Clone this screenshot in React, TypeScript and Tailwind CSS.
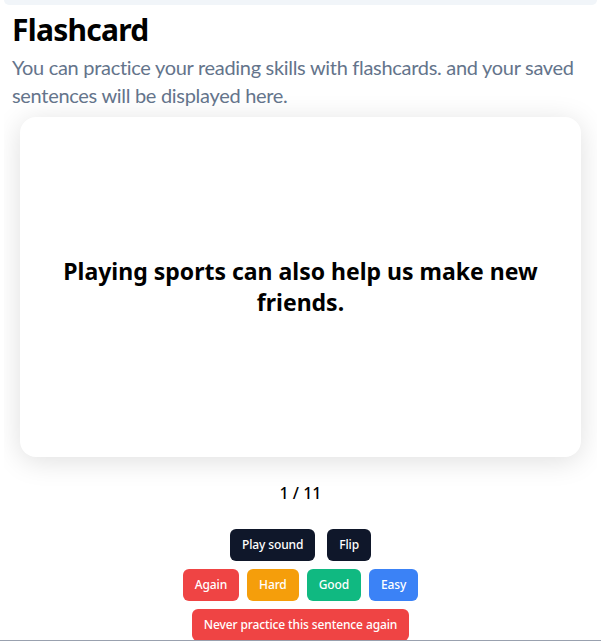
import React from "react";

const noto = { fontFamily: '"Noto Sans", "Open Sans", sans-serif' };
const lato = { fontFamily: 'Lato, "Noto Sans", sans-serif' };

function Btn({ label, color }: { label: string; color: string }) {
  return (
    <button
      className={`h-8 px-3 rounded-md text-xs font-medium tracking-[-0.01em] text-white ${color}`}
      style={noto}
    >
      {label}
    </button>
  );
}

export default function App() {
  return (
    <div className="h-[641px] overflow-hidden bg-white border-b border-gray-400" style={noto}>
      <div className="mx-1 overflow-hidden">
        {/* header strip (scrolled off) */}
        <div className="h-[5px] rounded-b-lg bg-[#f1f5f9]" />

        <div className="px-2 pt-[7px]">
          <h1 className="text-3xl font-bold text-black leading-9 tracking-tight">Flashcard</h1>
          <p className="mt-[5px] text-xl leading-7 text-[#64748b] tracking-[-0.015em]" style={lato}>
            You can practice your reading skills with flashcards. and your saved sentences will be
            displayed here.
          </p>
        </div>

        {/* card */}
        <div className="px-4 pt-2 pb-6">
          <div className="h-[340px] rounded-2xl bg-white shadow-[0_4px_28px_rgba(0,0,0,0.13)] flex items-center justify-center px-10">
            <p className="text-center text-[23px] leading-[31px] font-bold text-black">
              Playing sports can also help us make new friends.
            </p>
          </div>
        </div>

        <div className="flex flex-col items-center">
          <div className="text-base font-medium text-black leading-6">1 / 11</div>
          <div className="mt-6 flex gap-3">
            <Btn label="Play sound" color="bg-[#0f172a]" />
            <Btn label="Flip" color="bg-[#0f172a]" />
          </div>
          <div className="mt-2 flex gap-2">
            <Btn label="Again" color="bg-[#ef4444]" />
            <Btn label="Hard" color="bg-[#f59e0b]" />
            <Btn label="Good" color="bg-[#10b981]" />
            <Btn label="Easy" color="bg-[#3b82f6]" />
          </div>
          <div className="mt-2 flex">
            <Btn label="Never practice this sentence again" color="bg-[#ef4444]" />
          </div>
        </div>
      </div>
    </div>
  );
}
